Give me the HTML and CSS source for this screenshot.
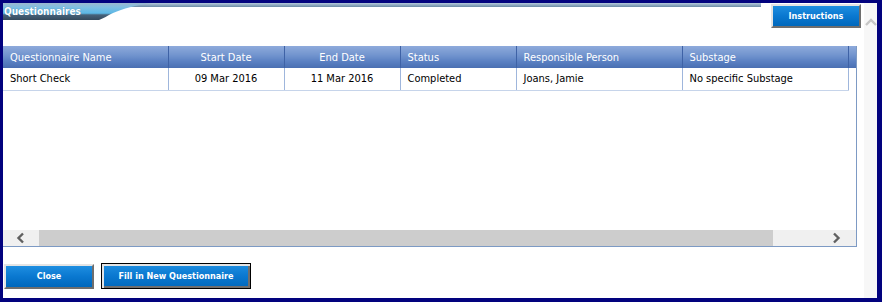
FILE: index.html
```html
<!DOCTYPE html>
<html lang="en">
<head>
  <meta charset="UTF-8">
  <meta name="viewport" content="width=device-width, initial-scale=1.0">
  <title>Questionnaires</title>
  <link rel="stylesheet" href="styles.css">
</head>
<body>
  <div class="frame">
    <div class="main">
      <div class="topbar">
        <div class="caption">
          <svg class="caption-bg" width="760" height="18" viewBox="0 0 760 18">
            <defs>
              <linearGradient id="bar" x1="0" y1="0" x2="0" y2="1">
                <stop offset="0" stop-color="#b4cadc"/>
                <stop offset="1" stop-color="#6a8aa6"/>
              </linearGradient>
              <linearGradient id="tab" x1="0" y1="0" x2="0" y2="1">
                <stop offset="0" stop-color="#9cb8cf"/>
                <stop offset="0.25" stop-color="#7fbfe2"/>
                <stop offset="0.6" stop-color="#5cb8e6"/>
                <stop offset="0.7" stop-color="#46627a"/>
                <stop offset="1" stop-color="#34495c"/>
              </linearGradient>
            </defs>
            <rect x="0" y="0" width="758" height="4" fill="url(#bar)"/>
            <path d="M0 0 H150 C132 2 120 6 110 10 C104 13 101 15 96 17 H0 Z" fill="url(#tab)"/>
          </svg>
          <span class="caption-text">Questionnaires</span>
        </div>
        <button class="btn btn-top">Instructions</button>
      </div>

      <div class="grid">
        <div class="grid-body">
          <table class="list">
            <colgroup>
              <col style="width:165px">
              <col style="width:116px">
              <col style="width:116px">
              <col style="width:116px">
              <col style="width:166px">
              <col style="width:166px">
              <col style="width:8px">
            </colgroup>
            <thead>
              <tr>
                <th>Questionnaire Name</th>
                <th class="mid">Start Date</th>
                <th class="mid">End Date</th>
                <th>Status</th>
                <th>Responsible Person</th>
                <th>Substage</th>
                <th></th>
              </tr>
            </thead>
            <tbody>
              <tr>
                <td>Short Check</td>
                <td class="mid">09 Mar 2016</td>
                <td class="mid">11 Mar 2016</td>
                <td>Completed</td>
                <td>Joans, Jamie</td>
                <td>No specific Substage</td>
                <td class="tail"></td>
              </tr>
            </tbody>
          </table>
        </div>
        <div class="hscroll">
          <span class="arrow">
            <svg width="12" height="12" viewBox="0 0 12 12"><path d="M8 1.5 L3.5 6 L8 10.5" fill="none" stroke="#606060" stroke-width="2.4"/></svg>
          </span>
          <div class="track"><div class="thumb"></div></div>
          <span class="arrow">
            <svg width="12" height="12" viewBox="0 0 12 12"><path d="M4 1.5 L8.5 6 L4 10.5" fill="none" stroke="#606060" stroke-width="2.4"/></svg>
          </span>
        </div>
      </div>

      <div class="actions">
        <button class="btn btn-close">Close</button>
        <button class="btn btn-fill">Fill in New Questionnaire</button>
      </div>
    </div>

    <div class="vscroll">
      <svg width="12" height="8" viewBox="0 0 12 8"><path d="M1 7 L6 2 L11 7" fill="none" stroke="#c6c6c6" stroke-width="2.4"/></svg>
    </div>
  </div>
</body>
</html>
```

FILE: styles.css
```css
* {
  box-sizing: border-box;
}

body {
  margin: 0;
  font-family: "DejaVu Sans Condensed", "DejaVu Sans", sans-serif;
  font-stretch: condensed;
  font-size: 11px;
  color: #000;
  background: #fff;
}

.frame {
  display: flex;
  width: 882px;
  height: 302px;
  border-style: solid;
  border-color: #02027e;
  border-width: 3px 5px 4px 3px;
  background: #fff;
}

.main {
  flex: 1;
  display: flex;
  flex-direction: column;
}

/* title strip + instructions */
.topbar {
  display: flex;
  justify-content: space-between;
  align-items: flex-start;
  height: 43px;
}

.caption {
  position: relative;
  width: 760px;
  height: 18px;
}

.caption-bg {
  position: absolute;
  left: 0;
  top: 0;
}

.caption-text {
  position: relative;
  display: block;
  padding: 3px 0 0 1px;
  color: #fff;
  font-weight: bold;
  font-size: 10px;
  text-shadow: 0 0 1px rgba(40, 70, 100, 0.6);
}

.btn {
  font-family: inherit;
  font-stretch: condensed;
  font-size: 9px;
  font-weight: bold;
  color: #fff;
  background: linear-gradient(to bottom, #1e8ee0 0%, #0a78d0 50%, #0068bc 100%);
  border-style: solid;
  border-width: 2px;
  border-color: #e4e4e4 #6e6e6e #6e6e6e #e4e4e4;
  padding: 0;
  cursor: pointer;
}

.btn-top {
  width: 90px;
  height: 24px;
  margin: 1px 3px 0 0;
}

/* list grid */
.grid {
  display: flex;
  flex-direction: column;
  width: 854px;
  height: 201px;
  border: 1px solid #7d9ac4;
  border-left: 0;
  border-top: 0;
}

.grid-body {
  flex: 1;
  overflow: hidden;
}

.list {
  table-layout: fixed;
  border-collapse: collapse;
  width: 853px;
}

.list th {
  height: 22px;
  padding: 0 7px;
  text-align: left;
  font-weight: normal;
  font-size: 11px;
  color: #fff;
  background: linear-gradient(to bottom, #8eaadb 0%, #6f92cd 45%, #5a80c2 70%, #4a6fb2 100%);
  border-right: 1px solid #3e62a6;
  border-left: 1px solid #9db7e2;
  white-space: nowrap;
  overflow: hidden;
}

.list th:first-child {
  border-left: 0;
}

.list td {
  height: 22px;
  padding: 0 7px;
  font-size: 11px;
  border-right: 1px solid #9fb6dc;
  border-bottom: 1px solid #c6d4ea;
  white-space: nowrap;
  overflow: hidden;
}

.list td.tail {
  border-bottom: 0;
}

.list .mid {
  text-align: center;
}

.hscroll {
  display: flex;
  align-items: center;
  height: 16px;
  background: #f0f0f0;
}

.hscroll .arrow {
  display: flex;
  justify-content: center;
  align-items: center;
  width: 36px;
  height: 16px;
}

.hscroll .track {
  flex: 1;
  height: 16px;
  margin-right: 47px;
}

.hscroll .thumb {
  width: 100%;
  height: 100%;
  background: #cdcdcd;
}

.hscroll .arrow:last-child {
  width: 36px;
  justify-content: flex-start;
  padding-left: 10px;
}

/* bottom buttons */
.actions {
  display: flex;
  align-items: center;
  gap: 7px;
  padding: 16px 0 0 1px;
}

.btn-close {
  width: 90px;
  height: 25px;
}

.btn-fill {
  width: 150px;
  height: 26px;
  border: 1px solid #000;
  box-shadow: inset 2px 2px 0 #e4e4e4, inset -2px -2px 0 #6e6e6e;
}

.vscroll {
  width: 13px;
  background: #f7f7f7;
  display: flex;
  justify-content: center;
  align-items: flex-start;
  padding-top: 15px;
}
```
